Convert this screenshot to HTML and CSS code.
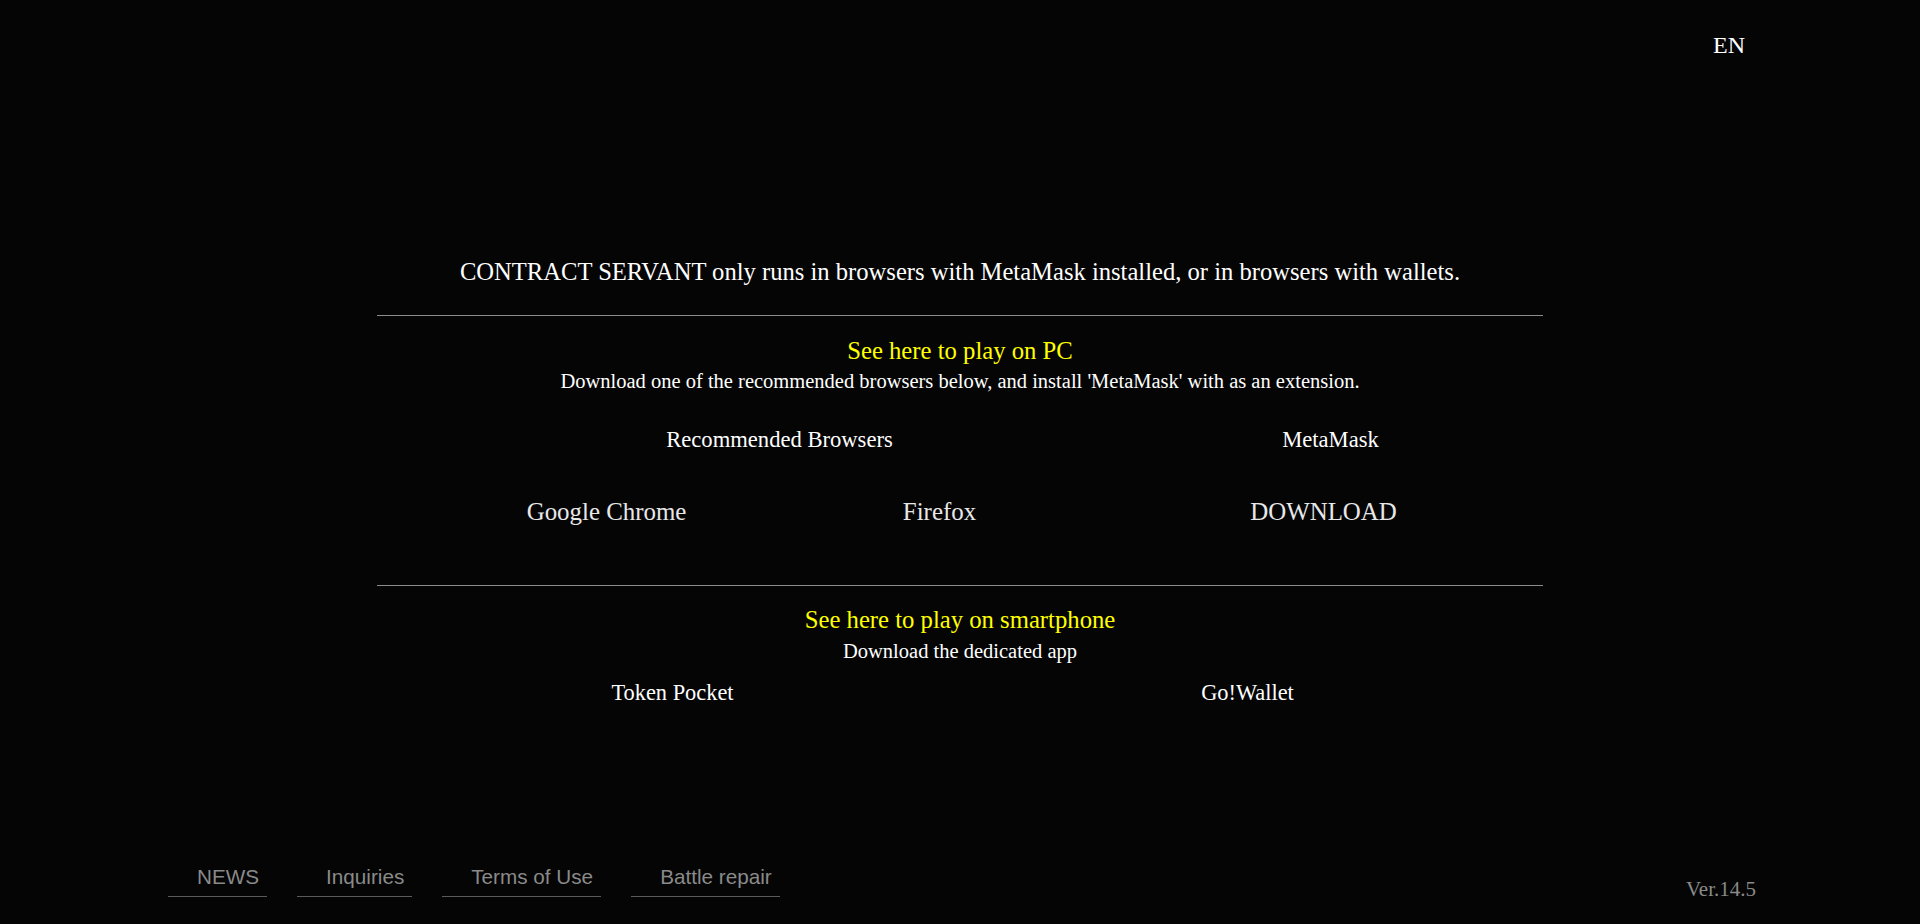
FILE: index.html
```html
<!DOCTYPE html>
<html lang="en">
<head>
<meta charset="utf-8">
<title>CONTRACT SERVANT</title>
<link rel="stylesheet" href="styles.css">
</head>
<body>
<div class="page">
  <header class="topbar">
    <span class="lang">EN</span>
  </header>

  <main class="content">
    <p class="notice">CONTRACT SERVANT only runs in browsers with MetaMask installed, or in browsers with wallets.</p>
    <div class="rule rule-top"></div>

    <section class="pc">
      <h2 class="sec-title">See here to play on PC</h2>
      <p class="sec-sub">Download one of the recommended browsers below, and install 'MetaMask' with as an extension.</p>
      <div class="pc-grid">
        <div class="group browsers">
          <div class="group-label">Recommended Browsers</div>
          <div class="group-items">
            <a class="dl-link">Google Chrome</a>
            <a class="dl-link">Firefox</a>
          </div>
        </div>
        <div class="group metamask">
          <div class="group-label">MetaMask</div>
          <div class="group-items single">
            <a class="dl-link">DOWNLOAD</a>
          </div>
        </div>
      </div>
    </section>

    <div class="rule rule-mid"></div>

    <section class="sp">
      <h2 class="sec-title">See here to play on smartphone</h2>
      <p class="sec-sub sp-sub">Download the dedicated app</p>
      <div class="app-grid">
        <a class="app-link">Token Pocket</a>
        <a class="app-link">Go!Wallet</a>
      </div>
    </section>
  </main>

  <footer class="footer">
    <nav class="foot-nav">
      <a class="foot-link">NEWS</a>
      <a class="foot-link">Inquiries</a>
      <a class="foot-link">Terms of Use</a>
      <a class="foot-link">Battle repair</a>
    </nav>
    <span class="version">Ver.14.5</span>
  </footer>
</div>
</body>
</html>
```

FILE: styles.css
```css
* { box-sizing: border-box; }

html, body {
  margin: 0;
  padding: 0;
  background: #050505;
}

body {
  font-family: "Liberation Serif", "Times New Roman", serif;
  color: #ffffff;
  line-height: 1;
}

.page {
  height: 100vh;
  display: flex;
  flex-direction: column;
}

.topbar {
  display: flex;
  justify-content: flex-end;
  padding: 33px 175px 0 0;
}

.lang {
  font-size: 24px;
  line-height: 1;
  color: #ffffff;
}

.content {
  width: 1166px;
  margin: 0 auto;
  padding-top: 202.5px;
  text-align: center;
}

.notice {
  margin: 0;
  font-size: 24.6px;
}

.rule {
  border-top: 1px solid #8c8c8c;
  height: 0;
}

.rule-top { margin-top: 30.6px; }
.rule-mid { margin-top: 59.5px; }

.sec-title {
  margin: 0;
  font-weight: normal;
  font-size: 24.7px;
  color: #ffff00;
}

.pc .sec-title { margin-top: 23px; }
.sp .sec-title { margin-top: 22.8px; }

.sec-sub {
  margin: 7.3px 0 0;
  font-size: 20.5px;
}

.sp-sub { margin-top: 7.5px; }

.pc .pc-grid { margin-top: 38.2px; }

.pc-grid {
  display: grid;
  grid-template-columns: 666px 333px;
  column-gap: 53px;
  padding-left: 63px;
}

.group-label {
  font-size: 22.6px;
}

.browsers .group-label { padding-left: 13px; }
.metamask .group-label { padding-left: 10px; }

.group-items {
  display: grid;
  grid-template-columns: 1fr 1fr;
  margin-top: 48.3px;
}

.group-items.single {
  grid-template-columns: 1fr;
  padding-right: 4px;
}

.dl-link {
  font-size: 24.9px;
  color: #e8e8e8;
  text-decoration: none;
}

.app-grid {
  display: grid;
  grid-template-columns: 1fr 1fr;
  padding: 0 8px;
  margin-top: 21.2px;
}

.app-link {
  font-size: 22.4px;
  color: #ffffff;
  text-decoration: none;
}

.footer {
  margin-top: auto;
  display: flex;
  justify-content: space-between;
  align-items: flex-end;
  padding: 0 164px 24px 168px;
}

.foot-nav {
  display: flex;
  gap: 30px;
  margin-bottom: 3px;
}

.foot-link {
  font-family: "Liberation Sans", Arial, sans-serif;
  font-size: 20.7px;
  line-height: 1;
  color: #8a8a8a;
  text-decoration: none;
  padding: 0 8px 8.5px 29px;
  border-bottom: 1px solid #5a5a5a;
}

.version {
  font-size: 21px;
  line-height: 1;
  color: #8a8a8a;
}
```
